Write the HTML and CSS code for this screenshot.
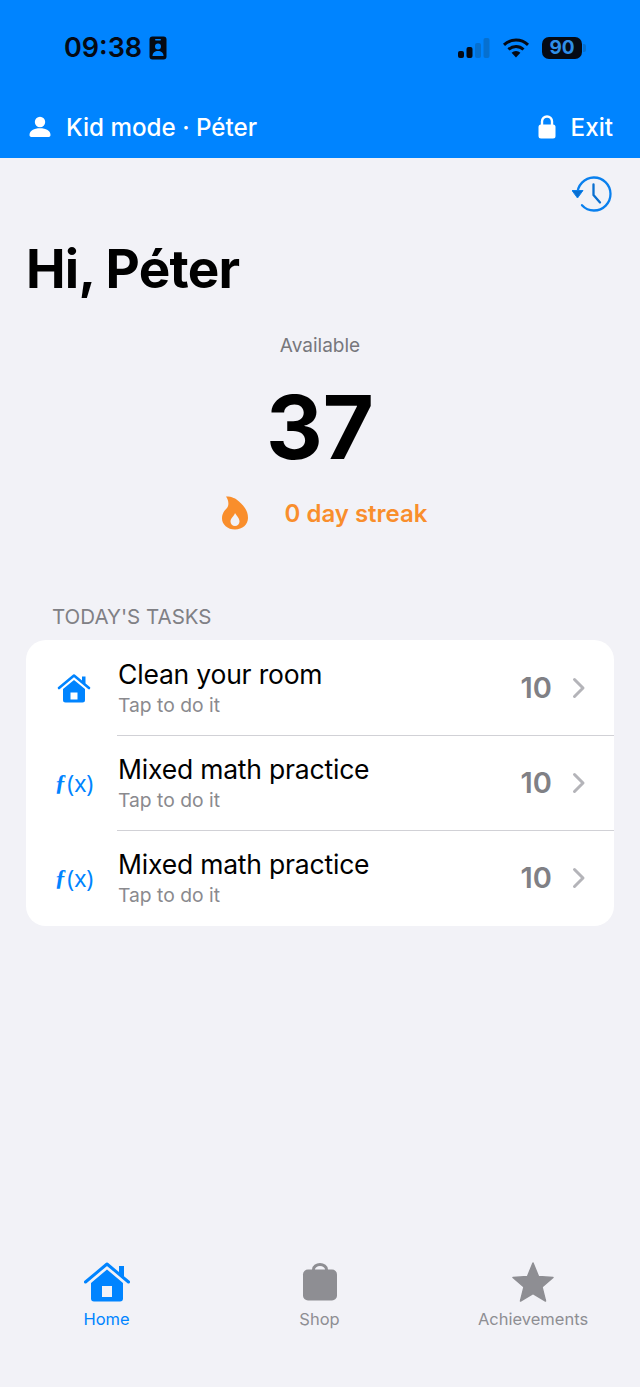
FILE: index.html
```html
<!DOCTYPE html>
<html lang="en">
<head>
    <meta charset="UTF-8">
    <meta name="viewport" content="width=device-width, initial-scale=1.0">
    <title>Kid mode</title>
    <link rel="stylesheet" href="styles.css">
</head>
<body>
    <div class="app">
        <header class="top">
            <div class="status">
                <div class="status-left">
                    <span class="clock">09:38</span>
                    <svg class="badge" width="18" height="24" viewBox="0 0 18 24">
                        <rect x="0.5" y="0.5" width="17" height="23" rx="3" fill="#050a14"/>
                        <rect x="6" y="3" width="6" height="1.6" rx="0.8" fill="#0084ff"/>
                        <circle cx="9" cy="10.5" r="3" fill="#0084ff"/>
                        <path d="M3.5 20c0-3.4 2.5-5 5.5-5s5.500 1.600 5.500 5z" fill="#0084ff"/>
                    </svg>
                </div>
                <div class="status-right">
                    <svg width="32" height="21" viewBox="0 0 32 21">
                        <rect x="0" y="13" width="6" height="7" rx="2" fill="#050a14"/>
                        <rect x="8.500" y="9" width="6" height="11" rx="2" fill="#050a14"/>
                        <rect x="17" y="5" width="6" height="15" rx="2" fill="#0670d0"/>
                        <rect x="25.500" y="0" width="6" height="20" rx="2" fill="#0670d0"/>
                    </svg>
                    <svg class="wifi" width="28" height="20" viewBox="0 0 28 20">
                        <path d="M14 19.500 9.600 14.700a6.500 6.500 0 0 1 8.800 0z" fill="#050a14"/>
                        <path d="M6.500 11.500a11 11 0 0 1 15 0" fill="none" stroke="#050a14" stroke-width="3"/>
                        <path d="M2 6.800a17.500 17.500 0 0 1 24 0" fill="none" stroke="#050a14" stroke-width="3"/>
                    </svg>
                    <div class="battery">
                        <span class="battery-body">90</span>
                        <span class="battery-cap"></span>
                    </div>
                </div>
            </div>
            <div class="mode">
                <div class="mode-item">
                    <svg width="22" height="22" viewBox="0 0 22 22">
                        <circle cx="11" cy="6" r="5.200" fill="#fff"/>
                        <path d="M0.500 19c0-4.500 4.500-6.800 10.500-6.800s10.500 2.300 10.500 6.800c0 1.500-1 2-2.500 2h-16c-1.500 0-2.500-.5-2.500-2z" fill="#fff"/>
                    </svg>
                    <span>Kid mode · Péter</span>
                </div>
                <div class="mode-item">
                    <svg width="18" height="24" viewBox="0 0 18 24">
                        <path d="M4 11V6.500a5 5 0 0 1 10 0V11" fill="none" stroke="#fff" stroke-width="2.400"/>
                        <rect x="0.500" y="9.500" width="17" height="14" rx="2.500" fill="#fff"/>
                    </svg>
                    <span>Exit</span>
                </div>
            </div>
        </header>

        <main class="content">
            <div class="history-row">
                <svg width="40" height="38" viewBox="0 0 40 38">
                    <path d="M5.500 19.500A16.500 16.500 0 1 1 22 35.500a16 16 0 0 1-12-5.300" fill="none" stroke="#0a80ee" stroke-width="2.300" stroke-linecap="round"/>
                    <path d="M0 15.500h11l-5.500 7.500z" fill="#0a6fd0" stroke="#0a80ee" stroke-width="1" stroke-linejoin="round"/>
                    <path d="M21.500 9.500V20l6.500 7.500" fill="none" stroke="#0a6fd0" stroke-width="2.300" stroke-linecap="round" stroke-linejoin="round"/>
                </svg>
            </div>
            <h1>Hi, Péter</h1>
            <div class="label">Available</div>
            <div class="points">37</div>
            <div class="streak">
                <svg width="28" height="34" viewBox="0 0 28 34">
                    <path fill-rule="evenodd" d="M5 0.500C11 0.500 15 2.500 18 5.500 23 10 27 14.500 27 22 27 28.500 21.500 33.500 14 33.500 6.500 33.500 1 28.500 1 22.500 1 17.500 3.500 14.500 6 12 8 9 8 5 5 0.500zM14 17C13.500 20 9.500 22 9.500 25.500 9.500 28 11.500 30 14 30 16.500 30 18.500 28 18.500 25.500 18.500 22 15.500 20 14 17z" fill="#f98e2c"/>
                </svg>
                <span>0 day streak</span>
            </div>

            <div class="section-title">TODAY'S TASKS</div>
            <div class="tasks">
                <div class="task">
                    <div class="task-icon">
                        <svg width="34" height="30" viewBox="0 0 34 30">
                            <path d="M2 15 17 2.500 32 15" fill="none" stroke="#0084ff" stroke-width="2.600" stroke-linecap="round" stroke-linejoin="round"/>
                            <rect x="25" y="3.500" width="3.500" height="7" fill="#0084ff"/>
                            <path fill-rule="evenodd" d="M17 7 6 16v11a2.500 2.500 0 0 0 2.500 2.500h17A2.500 2.500 0 0 0 28 27V16zM13.500 19.500h7v7h-7z" fill="#0084ff"/>
                        </svg>
                    </div>
                    <div class="task-text">
                        <div class="task-name">Clean your room</div>
                        <div class="task-sub">Tap to do it</div>
                    </div>
                    <span class="task-points">10</span>
                    <svg class="chevron" width="14" height="22" viewBox="0 0 14 22"><path d="M2.500 2.500 11 11l-8.500 8.500" fill="none" stroke="#b4b4b9" stroke-width="3" stroke-linecap="round" stroke-linejoin="round"/></svg>
                </div>
                <div class="task">
                    <div class="task-icon fx"><i>ƒ</i>(x)</div>
                    <div class="task-text">
                        <div class="task-name">Mixed math practice</div>
                        <div class="task-sub">Tap to do it</div>
                    </div>
                    <span class="task-points">10</span>
                    <svg class="chevron" width="14" height="22" viewBox="0 0 14 22"><path d="M2.500 2.500 11 11l-8.500 8.500" fill="none" stroke="#b4b4b9" stroke-width="3" stroke-linecap="round" stroke-linejoin="round"/></svg>
                </div>
                <div class="task">
                    <div class="task-icon fx"><i>ƒ</i>(x)</div>
                    <div class="task-text">
                        <div class="task-name">Mixed math practice</div>
                        <div class="task-sub">Tap to do it</div>
                    </div>
                    <span class="task-points">10</span>
                    <svg class="chevron" width="14" height="22" viewBox="0 0 14 22"><path d="M2.500 2.500 11 11l-8.500 8.500" fill="none" stroke="#b4b4b9" stroke-width="3" stroke-linecap="round" stroke-linejoin="round"/></svg>
                </div>
            </div>
        </main>

        <nav class="tabs">
            <div class="tab active">
                <svg width="46" height="40" viewBox="0 0 46 40">
                    <path d="M1.500 20 23 2 44.500 20" fill="none" stroke="#0084ff" stroke-width="3" stroke-linecap="round" stroke-linejoin="round"/>
                    <rect x="35" y="4" width="5" height="10" fill="#0084ff"/>
                    <path fill-rule="evenodd" d="M23 7.500 7 21v15.500a3 3 0 0 0 3 3h26a3 3 0 0 0 3-3V21zM18 24h10v11h-10z" fill="#0084ff"/>
                </svg>
                <span>Home</span>
            </div>
            <div class="tab">
                <svg width="36" height="38" viewBox="0 0 36 38">
                    <path d="M11.500 8V6.500a6.500 5 0 0 1 13 0V8" fill="none" stroke="#8e8e93" stroke-width="3"/>
                    <rect x="1" y="6.500" width="34" height="31" rx="5" fill="#8e8e93"/>
                </svg>
                <span>Shop</span>
            </div>
            <div class="tab">
                <svg width="44" height="40" viewBox="0 0 44 40">
                    <path d="M22 1 27.500 14.500 42 15.500 31 25 34.500 39 22 31.500 9.500 39 13 25 2 15.500 16.500 14.500z" fill="#8e8e93" stroke="#8e8e93" stroke-width="1.500" stroke-linejoin="round"/>
                </svg>
                <span>Achievements</span>
            </div>
        </nav>
    </div>
</body>
</html>
```

FILE: styles.css
```css
* {
    box-sizing: border-box;
}
body {
    margin: 0;
    background: #f2f2f7;
    font-family: Inter, "Liberation Sans", sans-serif;
    color: #000;
}
.app {
    width: 640px;
    height: 1387px;
    display: flex;
    flex-direction: column;
}
.top {
    height: 158px;
    background: #0084ff;
    color: #fff;
}
.status {
    height: 96px;
    padding: 30px 54px 0 64px;
    display: flex;
    justify-content: space-between;
    align-items: flex-start;
}
.status-left {
    display: flex;
    align-items: center;
    gap: 7px;
    height: 36px;
}
.clock {
    color: #050a14;
    font-size: 27px;
    font-weight: 600;
    line-height: 36px;
}
.status-right {
    display: flex;
    align-items: center;
    gap: 10px;
    height: 36px;
}
.wifi {
    margin-left: 2px;
}
.battery {
    display: flex;
    align-items: center;
    margin-left: 2px;
}
.battery-body {
    width: 40px;
    height: 22px;
    border-radius: 7px;
    background: #050a14;
    color: #2f8fe8;
    font-size: 19px;
    font-weight: 700;
    line-height: 22px;
    text-align: center;
}
.battery-cap {
    width: 3px;
    height: 8px;
    margin-left: 1px;
    border-radius: 0 2px 2px 0;
    background: #0670d0;
}
.mode {
    height: 62px;
    padding: 0 27px 0 29px;
    display: flex;
    justify-content: space-between;
    align-items: center;
    font-size: 24.2px;
    font-weight: 500;
}
.mode-item {
    display: flex;
    align-items: center;
    gap: 15px;
}
.content {
    flex: 1;
    padding: 0 26px;
}
.history-row {
    display: flex;
    justify-content: flex-end;
    padding-top: 17px;
    padding-right: 2px;
    height: 80px;
}
h1 {
    margin: 0;
    font-size: 53px;
    font-weight: 700;
    letter-spacing: -0.75px;
    line-height: 62px;
}
.label {
    margin-top: 33px;
    text-align: center;
    font-size: 19px;
    line-height: 26px;
    color: #77777c;
}
.points {
    margin-top: 13px;
    text-align: center;
    font-size: 88px;
    font-weight: 700;
    line-height: 110px;
}
.streak {
    margin-top: 13px;
    height: 36px;
    padding-left: 8px;
    display: flex;
    justify-content: center;
    align-items: center;
    gap: 36px;
    color: #f98e2c;
    font-size: 24px;
    font-weight: 600;
}
.section-title {
    margin-top: 73px;
    padding-left: 26px;
    font-size: 20.5px;
    line-height: 26px;
    color: #808085;
}
.tasks {
    margin-top: 10px;
    background: #fff;
    border-radius: 20px;
    overflow: hidden;
}
.task {
    height: 95.2px;
    display: flex;
    align-items: center;
    position: relative;
}
.task + .task::before {
    content: "";
    position: absolute;
    top: 0;
    left: 91px;
    right: 0;
    height: 1px;
    background: #d1d1d6;
}
.task-icon {
    width: 92px;
    display: flex;
    justify-content: center;
    padding-left: 4px;
    color: #0084ff;
}
.fx {
    font-family: "Noto Sans", sans-serif;
    font-size: 23px;
    line-height: 30px;
}
.fx i {
    font-family: "Liberation Serif", serif;
    font-weight: 700;
    margin-right: 1px;
}
.task-text {
    flex: 1;
}
.task-name {
    font-size: 26.5px;
    line-height: 33px;
    letter-spacing: -0.2px;
}
.task-sub {
    margin-top: 1px;
    font-size: 19.3px;
    line-height: 26px;
    color: #8a8a8e;
}
.task-points {
    font-size: 29px;
    font-weight: 600;
    color: #808085;
    margin-right: 20px;
}
.chevron {
    margin-right: 28px;
}
.tabs {
    height: 125px;
    display: grid;
    grid-template-columns: 213px 213px 214px;
    align-items: start;
}
.tab {
    display: flex;
    flex-direction: column;
    align-items: center;
    gap: 6px;
    font-size: 16.5px;
    line-height: 22px;
    color: #8e8e93;
}
.tab svg {
    height: 40px;
}
.tab.active {
    color: #0084ff;
}
```
